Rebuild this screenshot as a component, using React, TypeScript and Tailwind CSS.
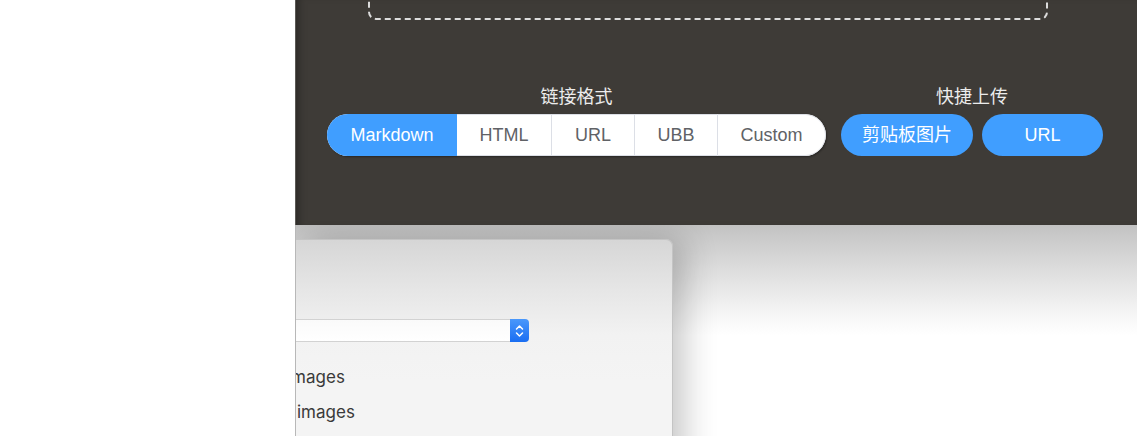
import React from "react";

const FONT = { fontFamily: '"Liberation Sans", "Noto Sans CJK SC", sans-serif' };

export default function App() {
  return (
    <div className="flex w-[1137px] h-[436px] overflow-hidden bg-white" style={FONT}>
      <div className="w-[295px] shrink-0 bg-white" />
      <div className="flex-1 flex flex-col overflow-hidden min-w-0">
        {/* dark header */}
        <div className="h-[225px] shrink-0 bg-[#3e3b37] border-l border-[#5a5855] shadow-[inset_8px_0_8px_-6px_rgba(0,0,0,0.35)] overflow-hidden">
          <div className="ml-[72px] -mt-[100px] w-[680px] h-[120px] border-2 border-dashed border-[#dcdcdc] rounded-lg" />
          <div className="flex ml-[31px] mt-[65px] gap-[15px]">
            <div className="w-[499px] flex flex-col items-center">
              <div className="h-[24px] leading-[24px] text-[18px] text-[#ececec]">链接格式</div>
              <div className="mt-[5px] flex h-[42px] w-[499px] rounded-full overflow-hidden bg-white shadow-[1px_1px_2px_rgba(0,0,0,0.35)] text-[18px]">
                <div className="w-[130px] h-full flex items-center justify-center bg-[#409eff] text-white">Markdown</div>
                <div className="w-[94px] h-full flex items-center justify-center text-[#606266] border-y border-[#dcdfe6]">HTML</div>
                <div className="w-[83px] h-full flex items-center justify-center text-[#606266] border-y border-l border-[#dcdfe6]">URL</div>
                <div className="w-[83px] h-full flex items-center justify-center text-[#606266] border-y border-l border-[#dcdfe6]">UBB</div>
                <div className="w-[109px] h-full flex items-center justify-center text-[#606266] border-y border-l border-r border-[#dcdfe6] rounded-r-full">Custom</div>
              </div>
            </div>
            <div className="w-[262px] flex flex-col items-center">
              <div className="h-[24px] leading-[24px] text-[18px] text-[#ececec]">快捷上传</div>
              <div className="mt-[5px] flex gap-[9px] text-[18px] text-white">
                <div className="w-[132px] h-[42px] rounded-full bg-[#409eff] flex items-center justify-center">剪贴板图片</div>
                <div className="w-[121px] h-[42px] rounded-full bg-[#409eff] flex items-center justify-center">URL</div>
              </div>
            </div>
          </div>
        </div>
        {/* lower picture area */}
        <div className="flex-1 border-l border-[#b8b8b8] bg-[linear-gradient(to_bottom,#c2c2c2_0px,#cbcbcb_14px,#e0e0e0_50px,#f6f6f6_90px,#ffffff_110px)] pt-[14px] overflow-hidden">
          <div className="w-[377px] h-[260px] rounded-tr-[7px] border-t border-r border-[#c4c4c4] bg-[linear-gradient(to_bottom,#d6d6d6_0px,#e6e6e6_50px,#f2f2f2_95px,#f4f4f4_140px)] shadow-[10px_0_34px_rgba(0,0,0,0.24)]">
            <div className="mt-[79px] flex h-[23px] w-[233px]">
              <div className="flex-1 bg-[linear-gradient(to_bottom,#fafafa,#ffffff)] border-y border-[#d2d2d2]" />
              <div className="w-[19px] h-full rounded-r-[4px] bg-[linear-gradient(to_bottom,#4a98fb,#1a6ef2)] flex items-center justify-center">
                <svg width="9" height="14" viewBox="0 0 9 14" fill="none" stroke="white" strokeWidth="1.5" strokeLinecap="round" strokeLinejoin="round">
                  <path d="M1.5 5 L4.5 2 L7.5 5" />
                  <path d="M1.5 9 L4.5 12 L7.5 9" />
                </svg>
              </div>
            </div>
            <div className="mt-[18px] text-[17px] leading-[35px] text-[#3a3a3a]" style={{ fontFamily: 'Inter, "Liberation Sans", sans-serif' }}>
              <div className="-ml-[9px]">images</div>
              <div className="ml-[1px]">images</div>
            </div>
          </div>
        </div>
      </div>
    </div>
  );
}
